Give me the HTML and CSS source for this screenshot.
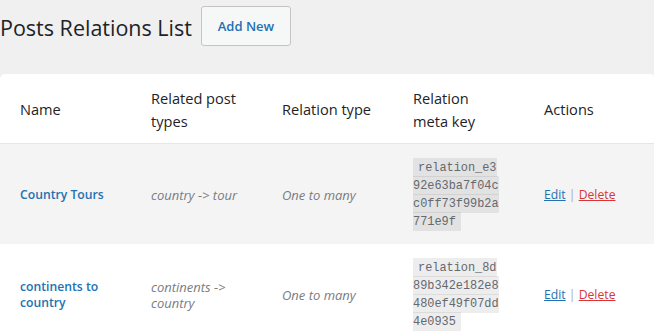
FILE: index.html
```html
<!DOCTYPE html>
<html lang="en">
<head>
    <meta charset="UTF-8">
    <meta name="viewport" content="width=device-width, initial-scale=1.0">
    <title>Posts Relations List</title>
    <link rel="stylesheet" href="styles.css">
</head>
<body>

<div class="page-head">
    <h1>Posts Relations List</h1>
    <a href="#" class="add-new">Add New</a>
</div>

<table class="relations">
    <colgroup>
        <col><col><col><col><col>
    </colgroup>
    <thead>
        <tr>
            <th>Name</th>
            <th>Related post types</th>
            <th>Relation type</th>
            <th>Relation meta key</th>
            <th>Actions</th>
        </tr>
    </thead>
    <tbody>
        <tr class="alt">
            <td><a href="#" class="rel-name">Country Tours</a></td>
            <td class="muted">country -&gt; tour</td>
            <td class="muted">One to many</td>
            <td><code>relation_e392e63ba7f04cc0ff73f99b2a771e9f</code></td>
            <td class="actions"><a href="#" class="edit">Edit</a> | <a href="#" class="delete">Delete</a></td>
        </tr>
        <tr>
            <td><a href="#" class="rel-name">continents to country</a></td>
            <td class="muted">continents -&gt; country</td>
            <td class="muted">One to many</td>
            <td><code>relation_8d89b342e182e8480ef49f07dd4e0935</code></td>
            <td class="actions"><a href="#" class="edit">Edit</a> | <a href="#" class="delete">Delete</a></td>
        </tr>
    </tbody>
</table>

</body>
</html>
```

FILE: styles.css
```css
body {
    font-family: 'Open Sans', 'Noto Sans', sans-serif;
    background: #f0f0f1;
    margin: 0;
    color: #1d2327;
    font-size: 12.2px;
}
.page-head {
    display: flex;
    align-items: center;
    gap: 9px;
    padding-top: 6px;
    height: 40px;
}
h1 {
    font-size: 21.5px;
    font-weight: 400;
    margin: 2px 0 0;
    color: #1d2327;
}
.add-new {
    display: inline-block;
    box-sizing: border-box;
    width: 90px;
    height: 40px;
    line-height: 38px;
    text-align: center;
    border: 1px solid #c3c4c7;
    border-radius: 3px;
    background: #f6f7f7;
    color: #2271b1;
    font-size: 13px;
    font-weight: 600;
    text-decoration: none;
}
.relations {
    margin-top: 28px;
    width: 654px;
    table-layout: fixed;
    border-collapse: separate;
    border-spacing: 0;
    background: #fff;
    border-radius: 5px 5px 0 0;
}
.relations col {
    width: 131px;
}
.relations th {
    text-align: left;
    font-size: 14.6px;
    font-weight: 500;
    line-height: 23px;
    height: 70px;
    box-sizing: border-box;
    padding: 2px 21px 0 20px;
    vertical-align: middle;
    border-bottom: 1px solid #e6e6e6;
}
.relations td {
    padding: 15px 21px 13px 20px;
    vertical-align: middle;
    line-height: 16px;
}
.relations tr.alt td {
    background: #f4f4f4;
}
.rel-name {
    color: #2271b1;
    font-weight: 600;
    text-decoration: none;
}
.muted {
    color: #787c82;
    font-style: italic;
    font-size: 13px;
}
code {
    font-family: 'Liberation Mono', monospace;
    font-size: 11.9px;
    line-height: 18px;
    color: #646970;
    background: rgba(0, 0, 0, 0.07);
    padding: 3px 5px 2px;
    word-break: break-all;
}
.actions {
    color: #a7aaad;
}
.edit {
    color: #2271b1;
}
.delete {
    color: #d63638;
}
```
